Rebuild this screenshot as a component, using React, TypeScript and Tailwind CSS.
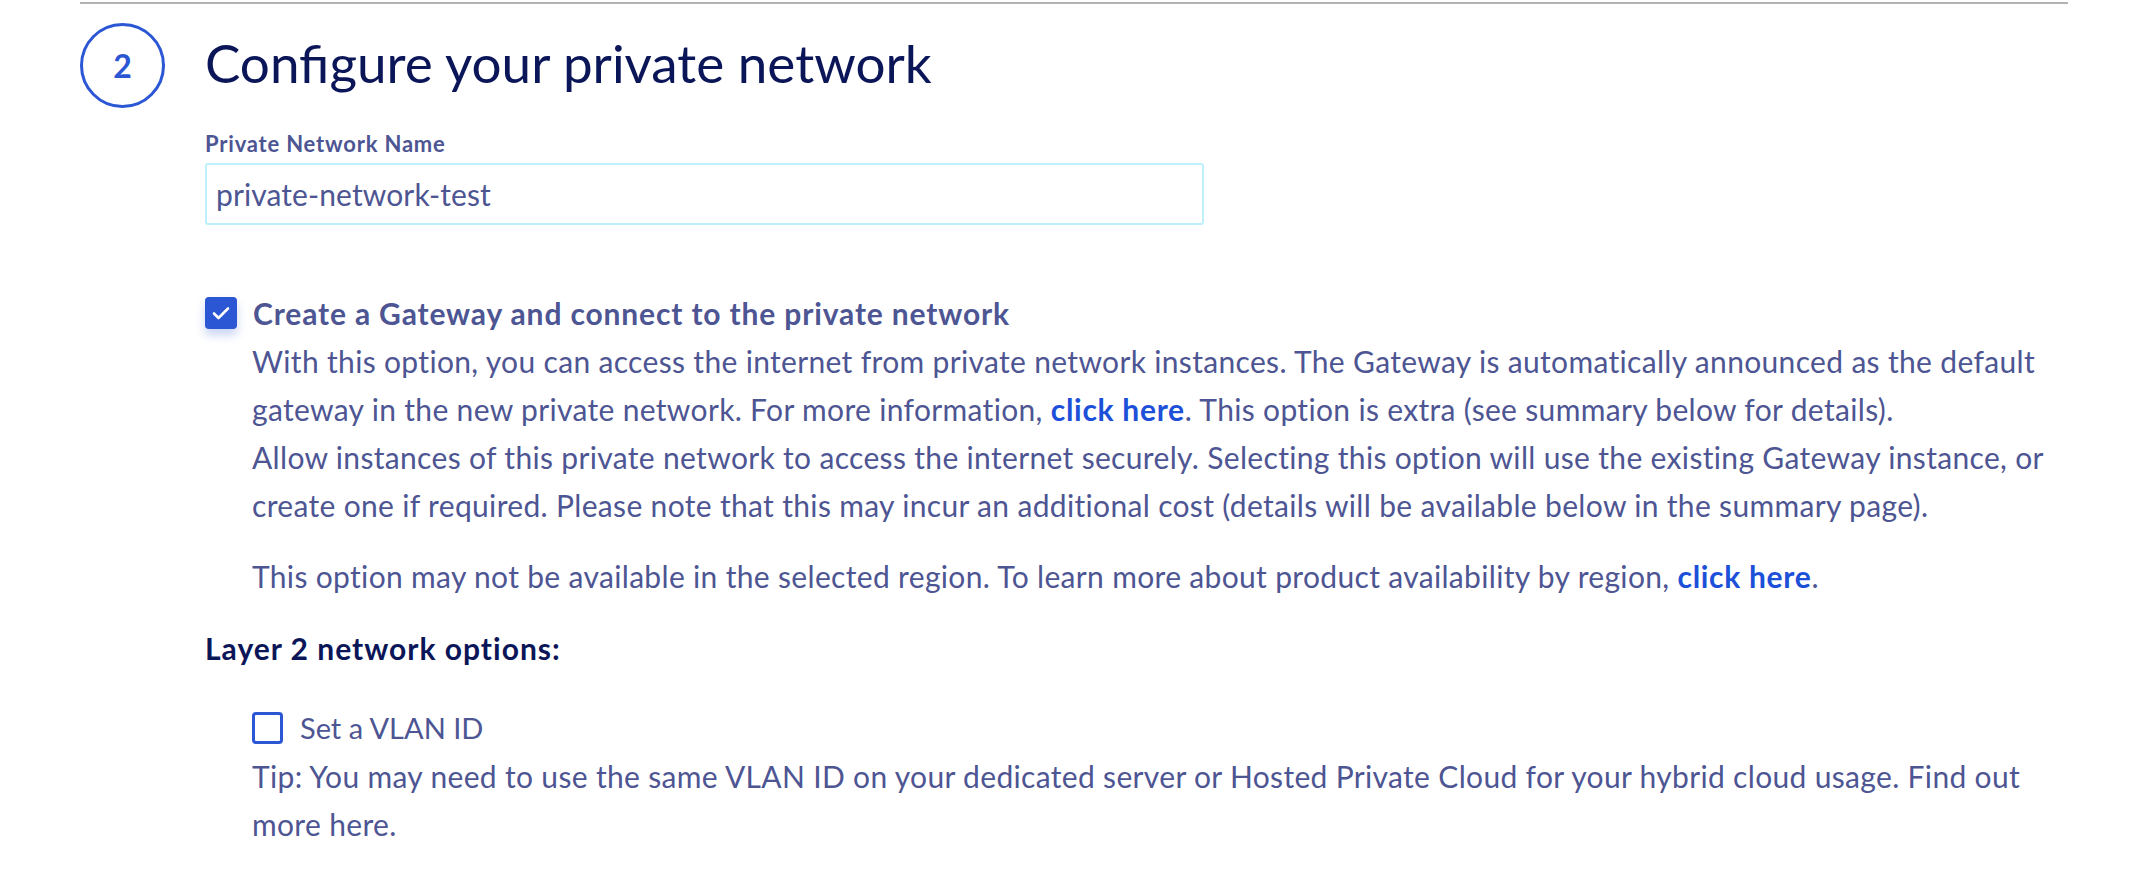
import { useState } from "react";

const ink = "text-[#4d5593]";
const body = "text-[30px] leading-[48px] tracking-[0.33px]";

function CheckBox({ checked, onChange }: { checked: boolean; onChange: () => void }) {
  return (
    <button
      type="button"
      onClick={onChange}
      className={
        checked
          ? "flex h-[32px] w-[32px] shrink-0 items-center justify-center rounded-[4px] bg-[#2b56d4] shadow-[0_6px_10px_rgba(43,86,212,0.25)]"
          : "flex h-[32px] w-[31px] shrink-0 items-center justify-center rounded-[4px] border-[3px] border-[#2b56d4] bg-white"
      }
    >
      {checked && (
        <svg width="18" height="14" viewBox="0 0 18 14" fill="none">
          <path d="M2 7.5l4.5 4.5L16 2.5" stroke="white" strokeWidth="2.6" strokeLinecap="round" strokeLinejoin="round" />
        </svg>
      )}
    </button>
  );
}

export default function App() {
  const [gateway, setGateway] = useState(true);
  const [vlan, setVlan] = useState(false);
  const [name, setName] = useState("private-network-test");

  return (
    <div className="min-h-[878px] bg-white pl-[80px] pr-[70px] font-['Lato',sans-serif]">
      <div className="h-[2px] bg-[#b3b3b3] mt-[2px]" />

      <div className="flex items-center gap-[40px] mt-[19px]">
        <div className="flex h-[85px] w-[85px] items-center justify-center rounded-full border-[3px] border-[#2b56d4] text-[32px] font-bold text-[#2b56d4]">
          2
        </div>
        <h2 className="text-[53px] leading-[62px] text-[#0b1658] -mt-[5px]">Configure your private network</h2>
      </div>

      <div className="ml-[125px] mt-[24px]">
        <label className={`block text-[22px] leading-[24px] font-bold tracking-[0.8px] ${ink}`}>Private Network Name</label>
        <input
          value={name}
          onChange={(e) => setName(e.target.value)}
          className={`mt-[7px] block h-[62px] w-[999px] rounded-[3px] border-2 border-[#bdf0fa] px-[9px] text-[30px] tracking-[0.1px] outline-none ${ink}`}
        />

        <div className="mt-[64px] flex items-center gap-[16px]">
          <CheckBox checked={gateway} onChange={() => setGateway(!gateway)} />
          <span className={`text-[30px] leading-[48px] font-bold tracking-[0.85px] ${ink}`}>
            Create a Gateway and connect to the private network
          </span>
        </div>
        <div className={`ml-[47px] ${body} ${ink}`}>
          <p>
            With this option, you can access the internet from private network instances. The Gateway is automatically
            announced as the default gateway in the new private network. For more information,{" "}
            <a href="#" className="font-bold tracking-[0.7px] text-[#1d50d8]">click here</a>. This option is extra (see
            summary below for details).
          </p>
          <p>
            Allow instances of this private network to access the internet securely. Selecting this option will use the
            existing Gateway instance, or create one if required. Please note that this may incur an additional cost
            (details will be available below in the summary page).
          </p>
          <p className="mt-[23px]">
            This option may not be available in the selected region. To learn more about product availability by region,{" "}
            <a href="#" className="font-bold tracking-[0.7px] text-[#1d50d8]">click here</a>.
          </p>
        </div>

        <h3 className="mt-[24px] text-[30px] leading-[48px] font-bold tracking-[1px] text-[#0b1658]">
          Layer 2 network options:
        </h3>

        <div className="mt-[32px] ml-[47px]">
          <div className="flex items-center gap-[17px]">
            <CheckBox checked={vlan} onChange={() => setVlan(!vlan)} />
            <span className={`text-[29px] leading-[48px] ${ink}`}>Set a VLAN ID</span>
          </div>
          <p className={`${body} ${ink}`}>
            Tip: You may need to use the same VLAN ID on your dedicated server or Hosted Private Cloud for your hybrid
            cloud usage. Find out more here.
          </p>
        </div>
      </div>
    </div>
  );
}
